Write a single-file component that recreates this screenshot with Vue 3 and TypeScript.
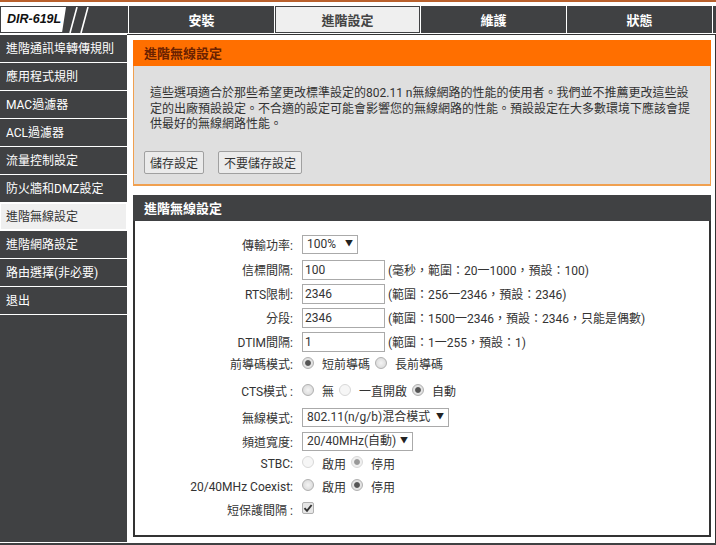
<script setup lang="ts">
import { ref } from "vue";

// Top tabs and sidebar entries
const tabs = ["安裝", "進階設定", "維護", "狀態"];
const menu = [
  "進階通訊埠轉傳規則",
  "應用程式規則",
  "MAC過濾器",
  "ACL過濾器",
  "流量控制設定",
  "防火牆和DMZ設定",
  "進階無線設定",
  "進階網路設定",
  "路由選擇(非必要)",
  "退出",
];

const activeTab = ref("進階設定");
const activeMenu = ref("進階無線設定");

// Form values
const power = ref("100%");
const beacon = ref("100");
const rts = ref("2346");
const frag = ref("2346");
const dtim = ref("1");
const preamble = ref("short");
const cts = ref("auto");
const mode = ref("802.11(n/g/b)混合模式");
const width = ref("20/40MHz(自動)");
const stbc = ref("off");
const coexist = ref("off");
const shortGi = ref(true);
</script>

<template>
  <div class="page">
    <div class="top-strip"></div>

    <header class="nav">
      <div class="logo">
        <span class="logo-text">DIR-619L</span>
        <svg class="slashes" width="24" height="26" viewBox="0 0 24 26">
          <path d="M8 0L1 26M19 0L12 26" stroke="#fff" stroke-width="1.6" fill="none" />
        </svg>
      </div>
      <button
        v-for="tab in tabs"
        :key="tab"
        class="tab"
        :class="{ active: activeTab === tab }"
        @click="activeTab = tab"
      >
        {{ tab }}
      </button>
      <div class="nav-end"></div>
    </header>

    <div class="body">
      <aside class="sidebar">
        <a
          v-for="item in menu"
          :key="item"
          class="menu-item"
          :class="{ active: activeMenu === item }"
          @click="activeMenu = item"
        >
          {{ item }}
        </a>
      </aside>

      <main class="main">
        <section class="panel intro">
          <h2 class="panel-title">進階無線設定</h2>
          <div class="intro-body">
            <p>
              這些選項適合於那些希望更改標準設定的802.11 n無線網路的性能的使用者。我們並不推薦更改這些設定的出廠預設設定。不合適的設定可能會影響您的無線網路的性能。預設設定在大多數環境下應該會提供最好的無線網路性能。
            </p>
            <div class="actions">
              <button class="btn">儲存設定</button>
              <button class="btn">不要儲存設定</button>
            </div>
          </div>
        </section>

        <section class="panel settings">
          <h2 class="panel-title">進階無線設定</h2>
          <form class="form" @submit.prevent>
            <div class="row first">
              <label>傳輸功率:</label>
              <div class="select w-power">
                <select v-model="power">
                  <option>100%</option>
                  <option>70%</option>
                  <option>50%</option>
                </select>
                <i class="arrow">▼</i>
              </div>
            </div>
            <div class="row input-row beacon">
              <label>信標間隔:</label>
              <input v-model="beacon" type="text" />
              <span class="hint">(毫秒，範圍：20一1000，預設：100)</span>
            </div>
            <div class="row input-row">
              <label>RTS限制:</label>
              <input v-model="rts" type="text" />
              <span class="hint">(範圍：256一2346，預設：2346)</span>
            </div>
            <div class="row input-row">
              <label>分段:</label>
              <input v-model="frag" type="text" />
              <span class="hint">(範圍：1500一2346，預設：2346，只能是偶數)</span>
            </div>
            <div class="row input-row">
              <label>DTIM間隔:</label>
              <input v-model="dtim" type="text" />
              <span class="hint">(範圍：1一255，預設：1)</span>
            </div>
            <div class="row radio-row preamble">
              <label>前導碼模式:</label>
              <input v-model="preamble" type="radio" value="short" />
              <span class="opt">短前導碼</span>
              <input v-model="preamble" type="radio" value="long" />
              <span class="opt">長前導碼</span>
            </div>
            <div class="row radio-row cts">
              <label>CTS模式 :</label>
              <input v-model="cts" type="radio" value="none" />
              <span class="opt">無</span>
              <input v-model="cts" type="radio" value="always" disabled />
              <span class="opt">一直開啟</span>
              <input v-model="cts" type="radio" value="auto" />
              <span class="opt">自動</span>
            </div>
            <div class="row wireless">
              <label>無線模式:</label>
              <div class="select w-mode">
                <select v-model="mode">
                  <option>802.11(n/g/b)混合模式</option>
                  <option>802.11n</option>
                </select>
                <i class="arrow">▼</i>
              </div>
            </div>
            <div class="row channel">
              <label>頻道寬度:</label>
              <div class="select w-width">
                <select v-model="width">
                  <option>20/40MHz(自動)</option>
                  <option>20MHz</option>
                </select>
                <i class="arrow">▼</i>
              </div>
            </div>
            <div class="row radio-row">
              <label>STBC:</label>
              <input v-model="stbc" type="radio" value="on" disabled />
              <span class="opt">啟用</span>
              <input v-model="stbc" type="radio" value="off" disabled />
              <span class="opt">停用</span>
            </div>
            <div class="row radio-row">
              <label>20/40MHz Coexist:</label>
              <input v-model="coexist" type="radio" value="on" />
              <span class="opt">啟用</span>
              <input v-model="coexist" type="radio" value="off" />
              <span class="opt">停用</span>
            </div>
            <div class="row radio-row">
              <label>短保護間隔 :</label>
              <span class="check">
                <input v-model="shortGi" type="checkbox" />
                <svg v-if="shortGi" width="12" height="12" viewBox="0 0 12 12">
                  <path d="M2.5 6.2L5 8.8L9.6 3" stroke="#333" stroke-width="1.9" fill="none" />
                </svg>
              </span>
            </div>
          </form>
        </section>
      </main>
    </div>

    <div class="bottom-strip"></div>
  </div>
</template>

<style>
html,
body {
  margin: 0;
  background: #fff;
}
</style>

<style scoped>
.page {
  width: 716px;
  height: 545px;
  overflow: hidden;
  display: flex;
  flex-direction: column;
  font-family: Roboto, "Noto Sans CJK TC", sans-serif;
  font-size: 12px;
  color: #333;
  background: #fff;
}

.top-strip {
  height: 2px;
  margin-bottom: 4px;
  background: #b9602c;
}

.nav {
  display: flex;
  height: 27px;
  gap: 1px;
  flex-shrink: 0;
}

.logo {
  width: 128px;
  display: flex;
  align-items: center;
  background: #404143;
  padding-left: 1px;
  box-sizing: border-box;
}

.logo-text {
  width: 65px;
  height: 25px;
  line-height: 25px;
  padding-left: 6px;
  box-sizing: border-box;
  background: #fff;
  color: #111;
  font-family: "Liberation Sans", sans-serif;
  font-size: 12.5px;
  font-weight: bold;
  font-style: italic;
  clip-path: polygon(0 0, 100% 0, 94% 100%, 0 100%);
}

.slashes {
  margin-left: 3px;
}

.tab {
  width: 145px;
  padding: 0;
  border: none;
  background: #404143;
  color: #fff;
  font-family: inherit;
  font-size: 13px;
  font-weight: bold;
}

.tab.active {
  background: #efefef;
  color: #444;
  box-shadow: inset 0 0 0 1px #404143;
}

.nav-end {
  flex: 1;
  background: #404143;
}

.body {
  flex: 1;
  display: flex;
  min-height: 0;
  margin-top: 2px;
}

.sidebar {
  width: 127px;
  flex-shrink: 0;
  display: flex;
  flex-direction: column;
  background: #404143;
  margin-bottom: 1px;
}

.menu-item {
  height: 27px;
  line-height: 29px;
  padding-left: 6px;
  border-bottom: 1px solid #fff;
  color: #fff;
  cursor: pointer;
}

.menu-item.active {
  background: #efefef;
  color: #333;
  box-shadow: inset 0 0 0 1px #fff;
}

.main {
  flex: 1;
  display: flex;
  flex-direction: column;
  gap: 9px;
  padding: 6px 4px 0 6px;
  border-right: 1px solid #333;
  border-top: 1px solid #333;
  margin-left: 0;
  margin-top: -1px;
}

.panel {
  box-sizing: border-box;
}

.panel-title {
  margin: 0;
  height: 26px;
  line-height: 28px;
  padding-left: 11px;
  font-size: 13px;
  font-weight: bold;
}

.intro {
  height: 146px;
  background: #dfdfdf;
  border: 1px solid #f0a050;
  border-bottom-width: 2px;
  margin-top: -1px;
}

.intro .panel-title {
  margin: -1px -1px 0;
  background: #ff6f00;
  color: #6b2200;
}

.intro-body {
  padding: 0 18px 0 16px;
}

.intro-body p {
  margin: 20px 0 0;
  line-height: 15.5px;
}

.actions {
  display: flex;
  gap: 14px;
  margin: 18px 0 0 -6px;
}

.btn {
  height: 23px;
  padding: 0 5px;
  border: 1px solid #a0a0a0;
  border-radius: 2px;
  background: #ebebeb;
  color: #333;
  font-family: inherit;
  font-size: 12px;
}

.settings {
  height: 342px;
  border: 2px solid #333;
  border-top: none;
  background: #fff;
}

.settings .panel-title {
  margin: 0 -2px;
  background: #404143;
  color: #fff;
}

.form {
  display: flex;
  flex-direction: column;
  padding-top: 11px;
}

.row {
  display: flex;
  align-items: center;
  height: 24px;
  flex-shrink: 0;
}

.row label {
  width: 158px;
  margin-right: 9px;
  text-align: right;
  flex-shrink: 0;
}

.input-row label,
.hint,
.preamble label,
.preamble .opt,
.cts label,
.cts .opt {
  margin-bottom: 2px;
}

.beacon {
  margin-top: 2px;
}

.row input[type="text"] {
  width: 83px;
  height: 20px;
  box-sizing: border-box;
  padding: 1px 2px;
  border: 1px solid #aaa;
  font-family: inherit;
  font-size: 12px;
  color: #333;
  background: #fff;
}

.hint {
  margin-left: 3px;
}

.radio-row {
  height: 23px;
}

.preamble {
  height: 20px;
}

.cts {
  height: 22px;
  margin-top: 6px;
}

.wireless {
  margin-top: 3px;
}

.channel {
  margin-bottom: -1px;
}

.radio-row input[type="radio"] {
  appearance: none;
  width: 12px;
  height: 12px;
  margin: -3px 8px 0 0;
  border: 1px solid #b0b0b0;
  border-radius: 50%;
  background: radial-gradient(circle at 50% 50%, #f4f4f4, #d4d4d4);
}

.radio-row input[type="radio"]:checked {
  background: radial-gradient(circle, #555 0, #555 2.4px, #e4e4e4 3.4px, #d8d8d8 100%);
}

.radio-row input[type="radio"]:disabled {
  border-color: #d8d8d8;
  background: #f6f6f6;
}

.radio-row input[type="radio"]:disabled:checked {
  background: radial-gradient(circle, #999 0, #999 2.4px, #efefef 3.4px);
}

.opt {
  margin-right: 5px;
}

.select {
  position: relative;
  height: 19px;
  box-sizing: border-box;
}

.select select {
  appearance: none;
  display: block;
  width: 100%;
  height: 100%;
  padding: 0 0 0 4px;
  border: 1px solid #aaa;
  border-radius: 0;
  background: #fff;
  color: #333;
  font-family: inherit;
  font-size: 12px;
}

.arrow {
  position: absolute;
  right: 5px;
  top: 3px;
  font-style: normal;
  font-size: 8px;
  line-height: 12px;
  color: #222;
  pointer-events: none;
}

.w-power {
  width: 56px;
}

.w-mode {
  width: 147px;
}

.w-width {
  width: 111px;
}

.check {
  position: relative;
  width: 12px;
  height: 12px;
  margin-top: -4px;
}

.check input {
  appearance: none;
  display: block;
  width: 12px;
  height: 12px;
  margin: 0;
  box-sizing: border-box;
  border: 1px solid #b0b0b0;
  border-radius: 2px;
  background: #e6e6e6;
}

.check svg {
  position: absolute;
  left: 0;
  top: 0;
  pointer-events: none;
}

.bottom-strip {
  height: 2px;
  background: #404143;
  flex-shrink: 0;
}
</style>
